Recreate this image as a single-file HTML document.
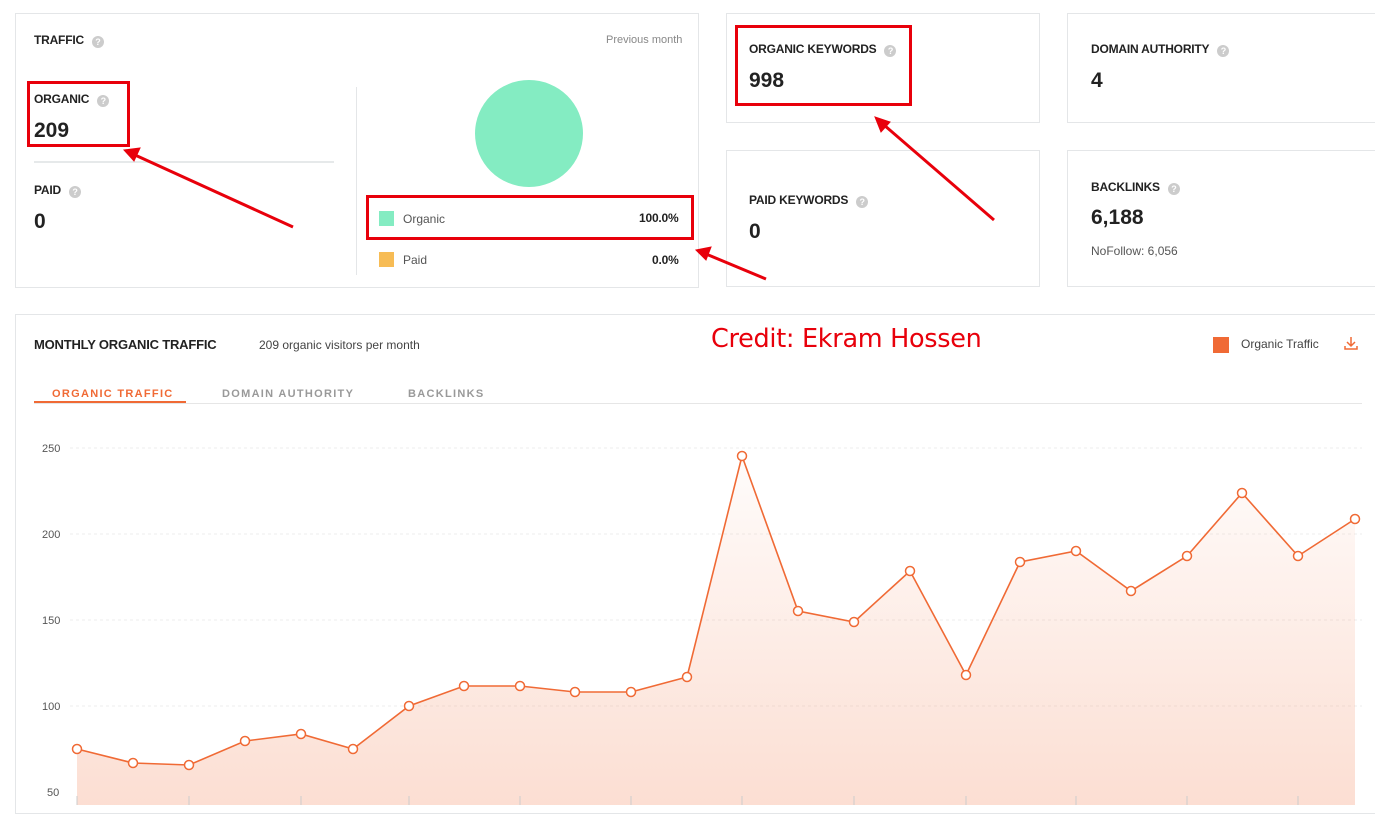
<!DOCTYPE html><html><head><style>
body{margin:0;width:1375px;height:805px;overflow:hidden;background:#fff;font-family:"Liberation Sans",sans-serif;color:#222;position:relative}
.card{position:absolute;border:1px solid #e4e6e8;background:#fff;box-sizing:border-box}
.t{position:absolute;font-size:12px;font-weight:bold;letter-spacing:-0.2px}
.q{display:inline-block;width:12px;height:12px;border-radius:50%;background:#ccc;color:#fff;font-size:9px;text-align:center;line-height:12px;margin-left:8px;vertical-align:-1px}
.n{position:absolute;font-size:21px;font-weight:bold}
.red{position:absolute;border:3px solid #e8000b;box-sizing:border-box}
.s{position:absolute;font-size:12px;color:#555}
</style></head><body>
<div class="card" style="left:15px;top:13px;width:684px;height:275px"></div>
<div class="t" style="left:34px;top:33px">TRAFFIC<span class="q">?</span></div>
<div class="s" style="left:606px;top:34px;font-size:11px;color:#888">Previous month</div>
<div class="t" style="left:34px;top:92px">ORGANIC<span class="q">?</span></div>
<div class="n" style="left:34px;top:119px">209</div>
<div style="position:absolute;left:34px;top:161px;width:300px;height:2px;background:#e6e9ea"></div>
<div class="t" style="left:34px;top:183px">PAID<span class="q">?</span></div>
<div class="n" style="left:34px;top:210px">0</div>
<div style="position:absolute;left:356px;top:87px;width:1px;height:188px;background:#e4e6e8"></div>
<div style="position:absolute;left:475px;top:80px;width:108px;height:107px;border-radius:50%;background:#84ecc2"></div>
<div style="position:absolute;left:379px;top:211px;width:15px;height:15px;background:#84ecc2"></div>
<div class="s" style="left:403px;top:212px">Organic</div>
<div class="t" style="left:639px;top:211px">100.0%</div>
<div style="position:absolute;left:379px;top:252px;width:15px;height:15px;background:#f7bc55"></div>
<div class="s" style="left:403px;top:253px">Paid</div>
<div class="t" style="left:652px;top:253px">0.0%</div>
<div class="red" style="left:27px;top:81px;width:103px;height:66px"></div>
<div class="red" style="left:366px;top:195px;width:328px;height:45px"></div>

<div class="card" style="left:726px;top:13px;width:314px;height:110px"></div>
<div class="t" style="left:749px;top:42px">ORGANIC KEYWORDS<span class="q">?</span></div>
<div class="n" style="left:749px;top:69px">998</div>
<div class="red" style="left:735px;top:25px;width:177px;height:81px"></div>
<div class="card" style="left:1067px;top:13px;width:320px;height:110px"></div>
<div class="t" style="left:1091px;top:42px">DOMAIN AUTHORITY<span class="q">?</span></div>
<div class="n" style="left:1091px;top:69px">4</div>
<div class="card" style="left:726px;top:150px;width:314px;height:137px"></div>
<div class="t" style="left:749px;top:193px">PAID KEYWORDS<span class="q">?</span></div>
<div class="n" style="left:749px;top:220px">0</div>
<div class="card" style="left:1067px;top:150px;width:320px;height:137px"></div>
<div class="t" style="left:1091px;top:180px">BACKLINKS<span class="q">?</span></div>
<div class="n" style="left:1091px;top:206px">6,188</div>
<div class="s" style="left:1091px;top:244px;font-size:12px">NoFollow: 6,056</div>

<div class="card" style="left:15px;top:314px;width:1375px;height:500px"></div>
<div class="t" style="left:34px;top:337px;font-size:13px">MONTHLY ORGANIC TRAFFIC</div>
<div class="s" style="left:259px;top:338px;font-size:12px;color:#444">209 organic visitors per month</div>
<div style="position:absolute;left:711px;top:324px;font-size:25.5px;color:#e8000b;font-family:'DejaVu Sans',sans-serif;letter-spacing:-0.3px">Credit: Ekram Hossen</div>
<div style="position:absolute;left:1213px;top:337px;width:16px;height:16px;background:#f06a35"></div>
<div class="s" style="left:1241px;top:337px;color:#444">Organic Traffic</div>
<svg style="position:absolute;left:1343px;top:335px" width="16" height="16"><path d="M8 2v8M4 7l4 4 4-4M2 11v3h12v-3" stroke="#f06a35" stroke-width="1.5" fill="none"/></svg>
<div style="position:absolute;left:34px;top:403px;width:1328px;height:1px;background:#e6e6e6"></div>
<div style="position:absolute;left:34px;top:401px;width:152px;height:2px;background:#f06a35"></div>
<div class="t" style="left:52px;top:388px;font-size:11px;letter-spacing:1.3px;color:#f06a35">ORGANIC TRAFFIC</div>
<div class="t" style="left:222px;top:388px;font-size:11px;letter-spacing:1.3px;color:#999">DOMAIN AUTHORITY</div>
<div class="t" style="left:408px;top:388px;font-size:11px;letter-spacing:1.3px;color:#999">BACKLINKS</div>
<svg style="position:absolute;left:0;top:0" width="1375" height="805">
<defs><linearGradient id="g" x1="0" y1="0" x2="0" y2="1"><stop offset="0" stop-color="#f06a35" stop-opacity="0.02"/><stop offset="1" stop-color="#f06a35" stop-opacity="0.22"/></linearGradient></defs>
<g font-size="11" fill="#555" font-family="Liberation Sans">
<text x="42" y="452">250</text><text x="42" y="538">200</text><text x="42" y="624">150</text><text x="42" y="710">100</text><text x="47" y="796">50</text></g>
<g stroke="#eee" stroke-dasharray="3,3"><line x1="70" y1="448" x2="1362" y2="448"/><line x1="70" y1="534" x2="1362" y2="534"/><line x1="70" y1="620" x2="1362" y2="620"/><line x1="70" y1="706" x2="1362" y2="706"/></g>
<polygon fill="url(#g)" points="77,805 77,749 133,763 189,765 245,741 301,734 353,749 409,706 464,686 520,686 575,692 631,692 687,677 742,456 798,611 854,622 910,571 966,675 1020,562 1076,551 1131,591 1187,556 1242,493 1298,556 1355,519 1355,805"/>
<g stroke="#ccc"><line x1="77" y1="796" x2="77" y2="805"/><line x1="189" y1="796" x2="189" y2="805"/><line x1="301" y1="796" x2="301" y2="805"/><line x1="409" y1="796" x2="409" y2="805"/><line x1="520" y1="796" x2="520" y2="805"/><line x1="631" y1="796" x2="631" y2="805"/><line x1="742" y1="796" x2="742" y2="805"/><line x1="854" y1="796" x2="854" y2="805"/><line x1="966" y1="796" x2="966" y2="805"/><line x1="1076" y1="796" x2="1076" y2="805"/><line x1="1187" y1="796" x2="1187" y2="805"/><line x1="1298" y1="796" x2="1298" y2="805"/></g>
<polyline fill="none" stroke="#f06a35" stroke-width="1.6" points="77,749 133,763 189,765 245,741 301,734 353,749 409,706 464,686 520,686 575,692 631,692 687,677 742,456 798,611 854,622 910,571 966,675 1020,562 1076,551 1131,591 1187,556 1242,493 1298,556 1355,519"/>
<g fill="#fff" stroke="#f06a35" stroke-width="1.5">
<circle cx="77" cy="749" r="4.5"/><circle cx="133" cy="763" r="4.5"/><circle cx="189" cy="765" r="4.5"/><circle cx="245" cy="741" r="4.5"/><circle cx="301" cy="734" r="4.5"/><circle cx="353" cy="749" r="4.5"/><circle cx="409" cy="706" r="4.5"/><circle cx="464" cy="686" r="4.5"/><circle cx="520" cy="686" r="4.5"/><circle cx="575" cy="692" r="4.5"/><circle cx="631" cy="692" r="4.5"/><circle cx="687" cy="677" r="4.5"/><circle cx="742" cy="456" r="4.5"/><circle cx="798" cy="611" r="4.5"/><circle cx="854" cy="622" r="4.5"/><circle cx="910" cy="571" r="4.5"/><circle cx="966" cy="675" r="4.5"/><circle cx="1020" cy="562" r="4.5"/><circle cx="1076" cy="551" r="4.5"/><circle cx="1131" cy="591" r="4.5"/><circle cx="1187" cy="556" r="4.5"/><circle cx="1242" cy="493" r="4.5"/><circle cx="1298" cy="556" r="4.5"/><circle cx="1355" cy="519" r="4.5"/></g>
<g stroke="#e8000b" stroke-width="3" fill="#e8000b">
<line x1="293" y1="227" x2="135" y2="155"/><polygon points="124,150 140,148 134,161" stroke-width="1"/>
<line x1="766" y1="279" x2="706" y2="254"/><polygon points="696,250 711,247 706,260" stroke-width="1"/>
<line x1="994" y1="220" x2="884" y2="125"/><polygon points="875,117 890,122 881,132" stroke-width="1"/>
</g></svg>
</body></html>
